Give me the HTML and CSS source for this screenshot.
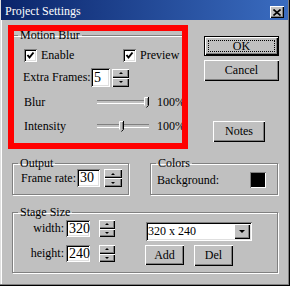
FILE: index.html
```html
<!DOCTYPE html>
<html lang="en">
<head>
    <meta charset="UTF-8">
    <title>Project Settings</title>
    <link rel="stylesheet" href="styles.css">
</head>
<body>

<div class="window">
    <div class="titlebar">
        <span class="title">Project Settings</span>
        <span class="close">
            <svg width="8" height="7" viewBox="0 0 8 7"><path d="M0.5 0.5L7.5 6.5M7.5 0.5L0.5 6.5" stroke="#000" stroke-width="1.6" fill="none"/></svg>
        </span>
    </div>

    <div class="client">
        <div class="top">
            <div class="marked">
                <fieldset class="group motion">
                    <legend>Motion Blur</legend>
                    <div class="group-body">
                        <div class="checks">
                            <label class="check enable">
                                <span class="box"><svg width="13" height="13" viewBox="0 0 13 13"><path d="M3.5 6L5.5 8.5L9.5 3.5" stroke="#000" stroke-width="2" fill="none"/></svg></span>
                                Enable
                            </label>
                            <label class="check">
                                <span class="box"><svg width="13" height="13" viewBox="0 0 13 13"><path d="M3.5 6L5.5 8.5L9.5 3.5" stroke="#000" stroke-width="2" fill="none"/></svg></span>
                                Preview
                            </label>
                        </div>

                        <div class="frames">
                            <span class="frames-label">Extra Frames:</span>
                            <span class="edit frames-edit">5</span>
                            <span class="spin frames-spin"><i class="up"></i><i class="down"></i></span>
                        </div>

                        <div class="slider-row">
                            <span class="slider-label">Blur</span>
                            <span class="slider"><span class="thumb" style="left: 48px"><svg width="5" height="11" viewBox="0 0 5 11"><path d="M0 0H5V8L2.5 11L0 8Z" fill="#c0c0c0"/><path d="M0.5 8.5V0.5H4" stroke="#fff" fill="none"/><path d="M4.5 0V8.3L2.5 10.5" stroke="#000" fill="none"/><path d="M3.5 1V8" stroke="#808080" fill="none"/></svg></span></span>
                            <span class="pct">100%</span>
                        </div>

                        <div class="slider-row">
                            <span class="slider-label">Intensity</span>
                            <span class="slider"><span class="thumb" style="left: 23px"><svg width="5" height="11" viewBox="0 0 5 11"><path d="M0 0H5V8L2.5 11L0 8Z" fill="#c0c0c0"/><path d="M0.5 8.5V0.5H4" stroke="#fff" fill="none"/><path d="M4.5 0V8.3L2.5 10.5" stroke="#000" fill="none"/><path d="M3.5 1V8" stroke="#808080" fill="none"/></svg></span></span>
                            <span class="pct">100%</span>
                        </div>
                    </div>
                </fieldset>
            </div>

            <div class="buttons">
                <button class="btn default">OK</button>
                <button class="btn cancel">Cancel</button>
                <button class="btn notes">Notes</button>
            </div>
        </div>

        <div class="row">
            <fieldset class="group output">
                <legend>Output</legend>
                <div class="group-body">
                    <span class="rate-label">Frame rate:</span>
                    <span class="edit rate-edit">30</span>
                    <span class="spin rate-spin"><i class="up"></i><i class="down"></i></span>
                </div>
            </fieldset>

            <fieldset class="group colors">
                <legend>Colors</legend>
                <div class="group-body">
                    <span>Background:</span>
                    <span class="swatch"></span>
                </div>
            </fieldset>
        </div>

        <fieldset class="group stage">
            <legend>Stage Size</legend>
            <div class="group-body">
                <div class="stage-left">
                    <div class="size-row first">
                        <span class="size-label">width:</span>
                        <span class="edit size-edit">320</span>
                        <span class="spin size-spin"><i class="up"></i><i class="down"></i></span>
                    </div>
                    <div class="size-row">
                        <span class="size-label">height:</span>
                        <span class="edit size-edit">240</span>
                        <span class="spin size-spin"><i class="up"></i><i class="down"></i></span>
                    </div>
                </div>
                <div class="stage-right">
                    <div class="combo">
                        <span class="combo-text">320 x 240</span>
                        <span class="combo-arrow"></span>
                    </div>
                    <div class="stage-buttons">
                        <button class="btn add">Add</button>
                        <button class="btn del">Del</button>
                    </div>
                </div>
            </div>
        </fieldset>
    </div>
</div>

</body>
</html>
```

FILE: styles.css
```css
* {
    box-sizing: border-box;
}
body {
    margin: 0;
    background: #c0c0c0;
    font-family: "Liberation Serif", "Times New Roman", serif;
    font-size: 12px;
    color: #000;
}
.window {
    width: 290px;
    height: 286px;
    background: #c0c0c0;
    box-shadow: inset -1px -1px #000, inset -2px -2px #808080, inset 1px 1px #dfdfdf, inset 2px 2px #fff;
}

/* title bar */
.titlebar {
    height: 20px;
    margin: 0 2px 0 1px;
    display: flex;
    justify-content: space-between;
    background: linear-gradient(90deg, #0a246a, #3a6cc0);
    color: #fff;
}
.title {
    padding: 4px 0 0 4px;
    line-height: 14px;
}
.close {
    width: 14px;
    height: 12px;
    margin: 6px 4px 0 0;
    display: flex;
    align-items: center;
    justify-content: center;
    background: #c0c0c0;
    box-shadow: inset 1px 1px #fff, inset -1px -1px #000, inset -2px -2px #808080;
}

.client {
    padding: 9px 0 0 12px;
}
.top {
    display: flex;
    height: 128px;
}

/* red highlight drawn over the group */
.marked {
    position: relative;
    width: 174px;
    height: 118px;
}
.marked::after {
    content: "";
    position: absolute;
    left: -4px;
    top: -4px;
    right: -2px;
    bottom: -2px;
    border: 6px solid #f00;
}

/* group boxes */
.group {
    margin: 0;
    padding: 0;
    min-inline-size: 0;
    border: 1px solid #808080;
    box-shadow: inset 1px 1px #fff, 1px 1px #fff;
}
.group legend {
    margin-left: 5px;
    padding: 0 2px;
    line-height: 12px;
}
.motion {
    width: 174px;
    height: 118px;
}
.motion .group-body {
    padding: 8px 0 0 11px;
}

/* check boxes */
.checks {
    display: flex;
    height: 13px;
}
.check {
    display: flex;
    align-items: center;
    gap: 4px;
    line-height: 13px;
}
.check.enable {
    width: 99px;
}
.box {
    width: 13px;
    height: 13px;
    display: block;
    background: #fff;
    box-shadow: inset 1px 1px #808080, inset -1px -1px #fff, inset 2px 2px #000, inset -2px -2px #dfdfdf;
}
.box svg {
    display: block;
}

/* edit fields and spinners */
.edit {
    display: block;
    background: #fff;
    box-shadow: inset 1px 1px #808080, inset -1px -1px #fff, inset 2px 2px #000, inset -2px -2px #dfdfdf;
    padding-left: 3px;
    font-size: 14px;
    overflow: hidden;
}
.spin {
    display: flex;
    flex-direction: column;
}
.spin i {
    flex: 1;
    display: flex;
    align-items: center;
    justify-content: center;
    background: #c0c0c0;
    box-shadow: inset 1px 1px #fff, inset -1px -1px #000, inset -2px -2px #808080;
}
.spin i::before {
    content: "";
    border-left: 2px solid transparent;
    border-right: 2px solid transparent;
}
.spin .up::before {
    border-bottom: 2px solid #000;
}
.spin .down::before {
    border-top: 2px solid #000;
}

.frames {
    display: flex;
    align-items: center;
    height: 19px;
    margin: 6px 0 0 -1px;
}
.frames-label {
    width: 68px;
}
.frames-edit {
    width: 19px;
    height: 19px;
    line-height: 19px;
}
.frames-spin {
    width: 17px;
    height: 18px;
    margin-left: 2px;
}

/* sliders */
.slider-row {
    display: flex;
    align-items: center;
    height: 16px;
    margin-top: 7px;
}
.slider-row + .slider-row {
    margin-top: 8px;
}
.slider-label {
    width: 72px;
}
.slider {
    position: relative;
    width: 55px;
    height: 16px;
    margin-right: 6px;
}
.slider::before {
    content: "";
    position: absolute;
    left: 1px;
    top: 6px;
    width: 52px;
    height: 2px;
    border-top: 1px solid #808080;
    border-bottom: 1px solid #fff;
}
.thumb {
    position: absolute;
    top: 3px;
}
.thumb svg {
    display: block;
}

/* buttons */
.buttons {
    margin-left: 18px;
    padding-top: 7px;
    display: flex;
    flex-direction: column;
    align-items: flex-start;
}
.btn {
    font: inherit;
    color: #000;
    border: none;
    padding: 0;
    background: #c0c0c0;
    box-shadow: inset 1px 1px #fff, inset -1px -1px #000, inset -2px -2px #808080;
    position: relative;
}
.btn.default {
    width: 75px;
    height: 20px;
    border: 1px solid #000;
    box-shadow: inset 1px 1px #fff, inset -1px -1px #000, inset -2px -2px #808080;
}
.btn.default::after {
    content: "";
    position: absolute;
    left: 3px;
    top: 3px;
    right: 3px;
    bottom: 3px;
    border: 1px dotted #000;
}
.cancel {
    width: 75px;
    height: 21px;
    margin-top: 4px;
}
.notes {
    width: 52px;
    height: 21px;
    margin: 40px 0 0 9px;
}

/* output / colors */
.row {
    display: flex;
}
.row .group {
    height: 38px;
}
.output {
    width: 117px;
}
.output .group-body {
    display: flex;
    align-items: center;
    padding-left: 8px;
}
.rate-label {
    width: 56px;
}
.rate-edit {
    width: 23px;
    height: 18px;
    line-height: 18px;
}
.rate-spin {
    width: 18px;
    height: 18px;
    margin-left: 4px;
}
.colors {
    width: 128px;
    margin-left: 21px;
}
.colors .group-body {
    display: flex;
    align-items: center;
    padding: 3px 11px 0 6px;
}
.swatch {
    width: 16px;
    height: 16px;
    margin-left: auto;
    background: #000;
    box-shadow: inset 1px 1px #808080, inset -1px -1px #fff;
}

/* stage size */
.stage {
    width: 266px;
    height: 67px;
    margin-top: 11px;
}
.stage .group-body {
    display: flex;
}
.size-row {
    display: flex;
    align-items: center;
    height: 17px;
    margin-top: 8px;
}
.size-row.first {
    margin-top: 2px;
}
.size-label {
    width: 51px;
    margin-right: 2px;
    text-align: right;
}
.size-edit {
    width: 24px;
    height: 17px;
    line-height: 17px;
}
.size-spin {
    width: 16px;
    height: 17px;
    margin-left: 9px;
}
.stage-right {
    margin-left: 30px;
}
.combo {
    width: 106px;
    height: 19px;
    margin: 4px 0 0 1px;
    padding: 2px;
    display: flex;
    align-items: center;
    justify-content: space-between;
    background: #fff;
    box-shadow: inset 1px 1px #808080, inset -1px -1px #fff, inset 2px 2px #000, inset -2px -2px #dfdfdf;
}
.combo-text {
    padding-left: 0;
}
.combo-arrow {
    width: 16px;
    height: 15px;
    display: flex;
    align-items: center;
    justify-content: center;
    background: #c0c0c0;
    box-shadow: inset 1px 1px #fff, inset -1px -1px #000, inset -2px -2px #808080;
}
.combo-arrow::before {
    content: "";
    border-left: 3px solid transparent;
    border-right: 3px solid transparent;
    border-top: 3px solid #000;
}
.stage-buttons {
    display: flex;
    align-items: flex-start;
    gap: 10px;
    margin-top: 4px;
}
.add {
    width: 39px;
    height: 20px;
}
.del {
    width: 39px;
    height: 21px;
}
```
